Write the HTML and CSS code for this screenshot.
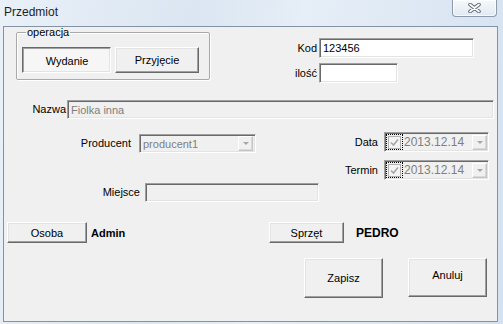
FILE: index.html
```html
<!DOCTYPE html>
<html lang="pl">
<head>
    <meta charset="UTF-8">
    <title>Przedmiot</title>
    <link rel="stylesheet" href="styles.css">
</head>
<body>
    <div class="window">
        <div class="titlebar">
            <span class="title">Przedmiot</span>
            <div class="close">
                <svg width="13" height="10" viewBox="0 0 13 10">
                    <path d="M2 1.5 L11 8.5 M11 1.5 L2 8.5" stroke="#5f6977" stroke-width="3.6" stroke-linecap="round" fill="none"/>
                    <path d="M2 1.5 L11 8.5 M11 1.5 L2 8.5" stroke="#ffffff" stroke-width="1.7" stroke-linecap="round" fill="none"/>
                </svg>
            </div>
        </div>

        <div class="client">
            <!-- operacja + kod -->
            <div class="top">
                <fieldset class="group">
                    <legend>operacja</legend>
                    <div class="toggle-row">
                        <div class="btn btn-pressed wydanie">Wydanie</div>
                        <div class="btn przyjecie">Przyjęcie</div>
                    </div>
                </fieldset>
                <div class="codes">
                    <span class="lbl">Kod</span>
                    <div class="textbox kod">123456</div>
                    <span class="lbl">ilość</span>
                    <div class="textbox ilosc"></div>
                </div>
            </div>

            <div class="name-row">
                <span class="lbl name-lbl">Nazwa</span>
                <div class="textbox disabled nazwa">Fiolka inna</div>
            </div>

            <div class="middle">
                <div class="col-left">
                    <div class="row producent-row">
                        <span class="lbl producent-lbl">Producent</span>
                        <div class="textbox disabled combo">
                            <span>producent1</span>
                            <span class="drop"><i class="arrow"></i></span>
                        </div>
                    </div>
                    <div class="row miejsce-row">
                        <span class="lbl miejsce-lbl">Miejsce</span>
                        <div class="textbox disabled miejsce"></div>
                    </div>
                </div>
                <div class="col-right">
                    <div class="row date-row">
                        <span class="lbl date-lbl">Data</span>
                        <div class="textbox disabled picker">
                            <span class="focus">
                                <span class="check">
                                    <svg width="11" height="11" viewBox="0 0 11 11"><path d="M2 5.5 L4.5 8 L9 2.5" stroke="#a6a6a6" stroke-width="1.6" fill="none"/></svg>
                                </span>
                            </span>
                            <span class="date">2013.12.14</span>
                            <span class="drop"><i class="arrow"></i></span>
                        </div>
                    </div>
                    <div class="row termin-row">
                        <span class="lbl date-lbl">Termin</span>
                        <div class="textbox disabled picker">
                            <span class="focus">
                                <span class="check">
                                    <svg width="11" height="11" viewBox="0 0 11 11"><path d="M2 5.5 L4.5 8 L9 2.5" stroke="#a6a6a6" stroke-width="1.6" fill="none"/></svg>
                                </span>
                            </span>
                            <span class="date">2013.12.14</span>
                            <span class="drop"><i class="arrow"></i></span>
                        </div>
                    </div>
                </div>
            </div>

            <div class="person-row">
                <div class="pair first">
                    <div class="btn osoba">Osoba</div>
                    <b class="value">Admin</b>
                </div>
                <div class="pair">
                    <div class="btn sprzet">Sprzęt</div>
                    <b class="value pedro">PEDRO</b>
                </div>
            </div>

            <div class="actions">
                <div class="btn big">Zapisz</div>
                <div class="btn big anuluj">Anuluj</div>
            </div>
        </div>
    </div>
</body>
</html>
```

FILE: styles.css
```css
* {
    margin: 0;
    padding: 0;
    box-sizing: border-box;
}

body {
    width: 503px;
    height: 324px;
    overflow: hidden;
    font-family: 'Liberation Sans', Arial, sans-serif;
    font-size: 11px;
    color: #000;
    background: linear-gradient(100deg, #e9f0f8 0%, #dbe6f2 35%, #e6eef7 55%, #d4e1f0 100%);
}

.titlebar {
    height: 26px;
    display: flex;
    align-items: flex-start;
}

.title {
    font-size: 12px;
    line-height: 14px;
    padding: 5px 0 0 4px;
    color: #1e1e1e;
}

.close {
    margin-left: auto;
    margin-right: 6px;
    width: 45px;
    height: 17px;
    border: 1px solid #8e9aab;
    border-top: none;
    border-radius: 0 0 4px 4px;
    background: linear-gradient(#f6f9fc, #e2e9f2);
    box-shadow: inset 0 0 0 1px rgba(255, 255, 255, 0.7);
    display: flex;
    justify-content: center;
    align-items: center;
}

.client {
    margin-left: 3px;
    width: 495px;
    height: 296px;
    background: #f0f0f0;
    border: 1px solid #8592a3;
}

.lbl {
    white-space: nowrap;
    line-height: 13px;
}

/* buttons */
.btn {
    display: flex;
    justify-content: center;
    align-items: center;
    background: #f0f0f0;
    border: 1px solid;
    border-color: #fff #696969 #696969 #fff;
    box-shadow: inset -1px -1px 0 #a0a0a0, inset 1px 1px 0 #e3e3e3;
}

.btn-pressed {
    border-color: #696969 #fff #fff #696969;
    box-shadow: inset 1px 1px 0 #a0a0a0, inset -1px -1px 0 #e3e3e3;
    background: #f6f6f6;
    padding: 1px 0 0 1px;
}

/* text fields */
.textbox {
    height: 20px;
    background: #fff;
    border: 1px solid;
    border-color: #a0a0a0 #fff #fff #a0a0a0;
    box-shadow: inset 1px 1px 0 #696969, inset -1px -1px 0 #e3e3e3;
    padding-left: 3px;
    display: flex;
    align-items: center;
    white-space: nowrap;
}

.textbox.disabled {
    background: #f0f0f0;
    color: #7f7f7f;
}

.top {
    height: 73px;
    display: flex;
    align-items: flex-start;
}

.group {
    margin-left: 12px;
    width: 194px;
    border: 1px solid #a9a9a9;
    border-radius: 2px;
    box-shadow: 1px 1px 0 #fff, inset 1px 1px 0 #fff;
    padding: 9px 9px 6px 5px;
}

.group legend {
    margin-left: 4px;
    padding: 0 1px;
    line-height: 11px;
}

.toggle-row {
    display: flex;
    gap: 4px;
}

.wydanie {
    width: 89px;
    height: 26px;
}

.przyjecie {
    width: 84px;
    height: 26px;
}

.codes {
    margin-top: 11px;
    display: grid;
    grid-template-columns: 107px auto;
    column-gap: 2px;
    row-gap: 5px;
    align-items: center;
}

.codes .lbl {
    text-align: right;
}

.kod {
    width: 155px;
}

.ilosc {
    width: 79px;
}

.name-row {
    display: flex;
    align-items: center;
    margin-top: 0;
}

.name-lbl {
    width: 62px;
    text-align: right;
    margin-right: 1px;
}

.nazwa {
    width: 427px;
    height: 19px;
}

.middle {
    display: flex;
}

.col-left {
    width: 320px;
}

.row {
    display: flex;
    align-items: center;
}

.producent-row {
    margin-top: 15px;
}

.producent-lbl {
    width: 127px;
    text-align: right;
    margin-right: 8px;
}

.combo {
    width: 117px;
    height: 19px;
    padding-right: 2px;
}

.drop {
    margin-left: auto;
    width: 15px;
    height: 15px;
    border: 1px solid;
    border-color: #fff #c4c4c4 #c4c4c4 #fff;
    box-shadow: inset -1px -1px 0 #dadada;
    display: flex;
    justify-content: center;
    align-items: center;
}

.arrow {
    width: 0;
    height: 0;
    border-left: 3px solid transparent;
    border-right: 3px solid transparent;
    border-top: 3px solid #a6a6a6;
}

.miejsce-row {
    margin-top: 30px;
}

.miejsce-lbl {
    width: 136px;
    text-align: right;
    margin-right: 5px;
}

.miejsce {
    width: 174px;
    height: 19px;
}

.col-right {
    flex: 1;
}

.date-row {
    margin-top: 13px;
}

.termin-row {
    margin-top: 8px;
}

.date-lbl {
    width: 54px;
    text-align: right;
    margin-right: 6px;
}

.picker {
    width: 105px;
    padding-left: 1px;
    padding-right: 1px;
    font-size: 12px;
}

.focus {
    width: 17px;
    height: 16px;
    border: 1px dotted #000;
    display: flex;
    justify-content: center;
    align-items: center;
}

.check {
    width: 13px;
    height: 13px;
    border: 1px solid #b1b1b1;
    background: #f4f4f4;
    display: flex;
    justify-content: center;
    align-items: center;
}

.date {
    margin-left: 1px;
}

.person-row {
    margin-top: 20px;
    display: flex;
    align-items: center;
}

.pair {
    display: flex;
    align-items: center;
}

.pair.first {
    width: 265px;
    padding-left: 3px;
}

.osoba {
    width: 80px;
    height: 21px;
}

.sprzet {
    width: 75px;
    height: 21px;
}

.value {
    margin-left: 4px;
    font-size: 11px;
}

.pedro {
    margin-left: 12px;
    font-size: 12px;
}

.actions {
    margin-top: 15px;
    padding-left: 300px;
    display: flex;
    gap: 25px;
}

.big {
    width: 79px;
    height: 40px;
}

.anuluj {
    height: 39px;
    padding-bottom: 5px;
}
```
